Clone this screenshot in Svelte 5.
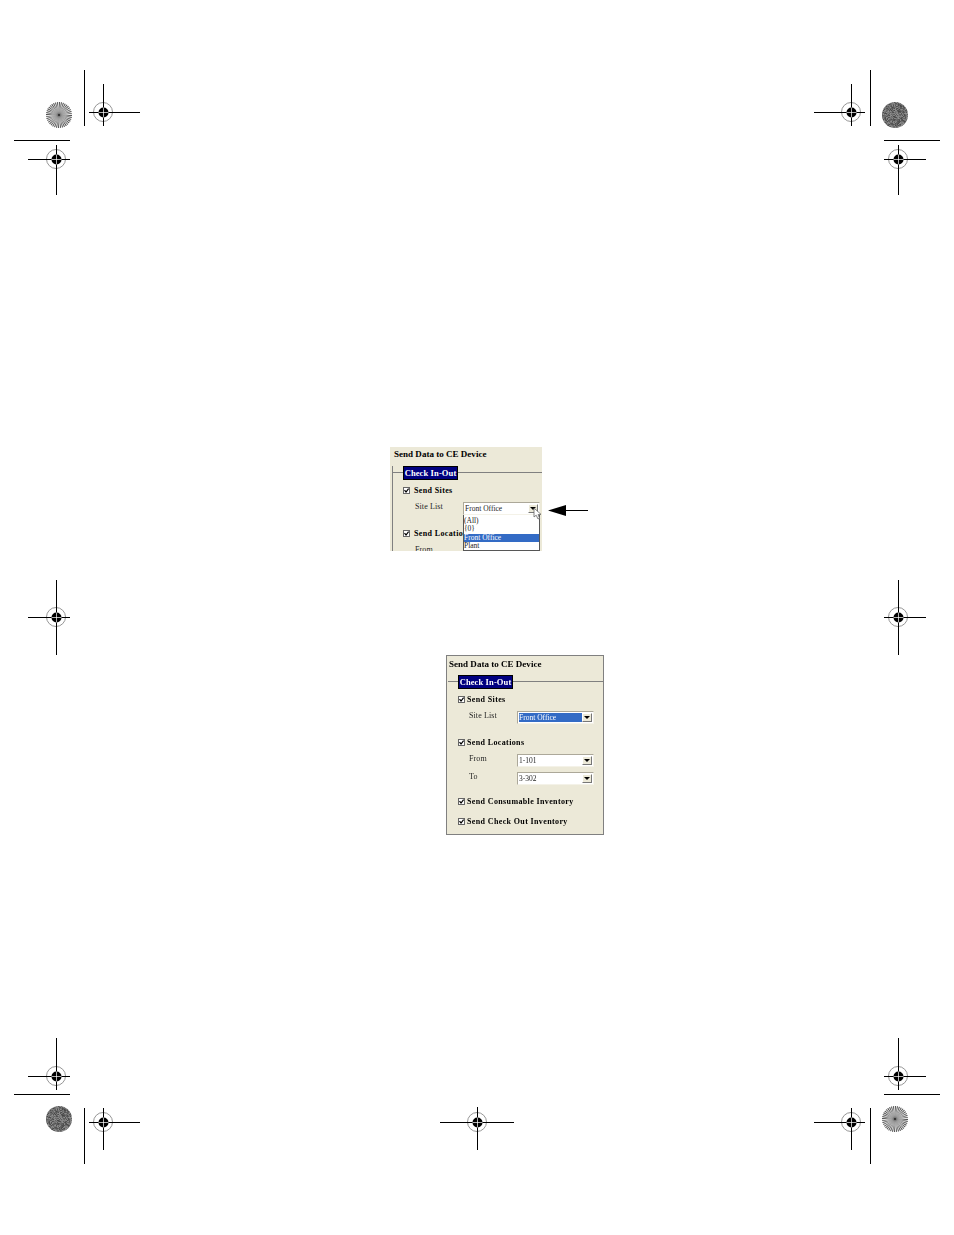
<script>
  const marks = [
    { cx: 103, cy: 112, x1: 89, x2: 140, y1: 84, y2: 126 },
    { cx: 56, cy: 159, x1: 28, x2: 70, y1: 145, y2: 195 },
    { cx: 851, cy: 112, x1: 814, x2: 865, y1: 84, y2: 126 },
    { cx: 898, cy: 159, x1: 884, x2: 926, y1: 145, y2: 195 },
    { cx: 56, cy: 617, x1: 28, x2: 70, y1: 580, y2: 655 },
    { cx: 898, cy: 617, x1: 884, x2: 926, y1: 580, y2: 655 },
    { cx: 56, cy: 1076, x1: 28, x2: 70, y1: 1038, y2: 1090 },
    { cx: 898, cy: 1076, x1: 884, x2: 926, y1: 1038, y2: 1090 },
    { cx: 103, cy: 1122, x1: 89, x2: 140, y1: 1108, y2: 1150 },
    { cx: 477, cy: 1122, x1: 440, x2: 514, y1: 1107, y2: 1150 },
    { cx: 851, cy: 1122, x1: 814, x2: 865, y1: 1108, y2: 1150 }
  ];
  const crops = [
    [84.5, 70, 84.5, 126], [14, 140.5, 70, 140.5],
    [870.5, 70, 870.5, 126], [884, 140.5, 940, 140.5],
    [14, 1094.5, 70, 1094.5], [84.5, 1108, 84.5, 1164],
    [884, 1094.5, 940, 1094.5], [870.5, 1108, 870.5, 1164]
  ];

  let seed = 17;
  function rnd() {
    seed = (seed * 16807) % 2147483647;
    return seed / 2147483647;
  }
  const noiseCells = [];
  for (let y = -13; y < 13; y++) {
    for (let x = -13; x < 13; x++) {
      const v = Math.round(70 + rnd() * 75);
      noiseCells.push({ x, y, fill: `rgb(${v},${v},${v})` });
    }
  }
  const wedges = [];
  const n = 40;
  for (let i = 0; i < n; i++) {
    const a = (i / n) * Math.PI * 2;
    const b = ((i + 0.45) / n) * Math.PI * 2;
    wedges.push(`M0 0L${(14 * Math.cos(a)).toFixed(2)} ${(14 * Math.sin(a)).toFixed(2)}L${(14 * Math.cos(b)).toFixed(2)} ${(14 * Math.sin(b)).toFixed(2)}Z`);
  }
  const noiseDiscs = [{ cx: 895, cy: 115 }, { cx: 59, cy: 1119 }];
  const spokeDiscs = [{ cx: 59, cy: 115 }, { cx: 895, cy: 1119 }];
</script>

{#snippet combo(value, selected = false)}
  <div class="combo">
    <span class="combo-text" class:selected>{value}</span>
    <span class="combo-btn"><i></i></span>
  </div>
{/snippet}

{#snippet check(label)}
  <div class="check-row">
    <svg class="box" width="7" height="7" viewBox="0 0 7 7" aria-hidden="true">
      <rect x="0.5" y="0.5" width="6" height="6" fill="#fff" stroke="#666" />
      <path d="M1.5 3.2 L3 5 L5.6 1.6" fill="none" stroke="#000" stroke-width="1.2" />
    </svg>
    <span>{label}</span>
  </div>
{/snippet}

{#snippet form(siteSelected)}
  <div class="title">Send Data to CE Device</div>
  <div class="group">
    <div class="tab">Check In-Out</div>
    {@render check('Send Sites')}
    <div class="field site"><span class="field-label">Site List</span>{@render combo('Front Office', siteSelected)}</div>
    <div class="locations">{@render check('Send Locations')}</div>
    <div class="field from"><span class="field-label">From</span>{@render combo('1-101')}</div>
    <div class="field to"><span class="field-label">To</span>{@render combo('3-302')}</div>
    <div class="consumable">{@render check('Send Consumable Inventory')}</div>
    <div class="checkout">{@render check('Send Check Out Inventory')}</div>
  </div>
{/snippet}

<main class="page">
  <svg class="canvas" width="954" height="1235" viewBox="0 0 954 1235" aria-hidden="true">
    <defs>
      <clipPath id="disc"><circle r="13" /></clipPath>
      <radialGradient id="hub">
        <stop offset="0" stop-color="#555" stop-opacity="1" />
        <stop offset="0.3" stop-color="#999" stop-opacity="0.95" />
        <stop offset="0.65" stop-color="#b0b0b0" stop-opacity="0.65" />
        <stop offset="1" stop-color="#bbb" stop-opacity="0" />
      </radialGradient>
    </defs>

    {#each crops as c}
      <line x1={c[0]} y1={c[1]} x2={c[2]} y2={c[3]} stroke="#000" stroke-width="1" />
    {/each}

    {#each marks as m}
      <circle cx={m.cx} cy={m.cy} r="9.5" fill="#fff" stroke="#8a8a8a" stroke-width="0.9" />
      <line x1={m.x1} y1={m.cy + 0.5} x2={m.x2} y2={m.cy + 0.5} stroke="#000" />
      <line x1={m.cx + 0.5} y1={m.y1} x2={m.cx + 0.5} y2={m.y2} stroke="#000" />
      <circle cx={m.cx + 0.5} cy={m.cy + 0.5} r="5" fill="#000" />
      <line x1={m.cx - 4.5} y1={m.cy + 0.5} x2={m.cx + 5.5} y2={m.cy + 0.5} stroke="#fff" stroke-width="0.7" />
      <line x1={m.cx + 0.5} y1={m.cy - 4.5} x2={m.cx + 0.5} y2={m.cy + 5.5} stroke="#fff" stroke-width="0.7" />
    {/each}

    {#each noiseDiscs as d}
      <g transform="translate({d.cx} {d.cy})" clip-path="url(#disc)">
        {#each noiseCells as c}
          <rect x={c.x} y={c.y} width="1" height="1" fill={c.fill} />
        {/each}
      </g>
    {/each}

    {#each spokeDiscs as d}
      <g transform="translate({d.cx} {d.cy})" clip-path="url(#disc)">
        <circle r="13" fill="#e6e6e6" />
        {#each wedges as w}
          <path d={w} fill="#444" />
        {/each}
        <circle r="10" fill="url(#hub)" />
        <circle r="0.9" fill="#222" />
      </g>
    {/each}

    <line x1="562" y1="510.5" x2="588" y2="510.5" stroke="#000" />
    <path d="M548 510.5 L566 505 L566 516 Z" fill="#000" />
  </svg>

  <section class="dialog first">
    {@render form(false)}
    <div class="popup">
      <div class="opt">(All)</div>
      <div class="opt">{'{0}'}</div>
      <div class="opt hi">Front Office</div>
      <div class="opt">Plant</div>
    </div>
    <svg class="cursor" width="10" height="14" viewBox="0 0 10 14" aria-hidden="true">
      <path d="M1 1 L1 10 L3.2 8.2 L5 12 L6.6 11.2 L5 7.6 L8 7.4 Z" fill="#fff" stroke="#666" stroke-width="0.8" />
    </svg>
  </section>

  <section class="dialog second">
    {@render form(true)}
  </section>
</main>

<style>
  :global(body) {
    margin: 0;
    background: #fff;
  }
  .page {
    position: relative;
    width: 954px;
    height: 1235px;
    overflow: hidden;
    background: #fff;
    font-family: "Liberation Serif", serif;
    color: #000;
  }
  .canvas {
    position: absolute;
    inset: 0;
    filter: blur(0.25px);
  }
  .dialog {
    position: absolute;
    box-sizing: border-box;
    background: #ece9d8;
    overflow: hidden;
    filter: blur(0.3px);
  }
  .first {
    left: 390px;
    top: 447px;
    width: 152px;
    height: 104px;
    padding-left: 2px;
  }
  .second {
    left: 446px;
    top: 655px;
    width: 158px;
    height: 180px;
    border: 1px solid #808080;
  }
  .title {
    height: 12px;
    line-height: 12px;
    padding: 2px 0 0 2px;
    font-size: 9px;
    font-weight: 700;
    letter-spacing: 0.02px;
    white-space: nowrap;
  }
  .first .title {
    padding: 1px 0 1px 2px;
  }
  .group {
    position: relative;
    width: 160px;
    margin-top: 5px;
    height: 170px;
    border-left: 1px solid #808080;
    box-sizing: border-box;
  }
  .second .group {
    border-left-color: transparent;
  }
  .group::before {
    content: "";
    position: absolute;
    left: 0;
    right: 0;
    top: 6px;
    border-top: 1px solid #808080;
  }
  .tab {
    position: relative;
    box-sizing: border-box;
    width: 55px;
    height: 14px;
    margin-left: 10px;
    margin-bottom: 4px;
    background: #000080;
    border: 1px solid #000;
    color: #fff;
    font-size: 8.5px;
    font-weight: 700;
    letter-spacing: 0.12px;
    line-height: 12px;
    text-align: center;
    white-space: nowrap;
  }
  .check-row {
    display: flex;
    align-items: center;
    gap: 2px;
    height: 12px;
    margin-left: 10px;
    font-size: 8px;
    font-weight: 700;
    letter-spacing: 0.37px;
    white-space: nowrap;
  }
  .first .check-row {
    gap: 4px;
  }
  .box {
    flex: none;
  }
  .field {
    display: flex;
    height: 13px;
    margin-left: 21px;
  }
  .first .field {
    margin-left: 22px;
  }
  .field-label {
    flex: none;
    width: 48px;
    font-size: 8px;
    letter-spacing: 0.1px;
    line-height: 10px;
    color: #222;
    opacity: 0.99;
  }
  .site { margin-top: 6px; }
  .locations { margin-top: 12px; }
  .from { margin-top: 6px; }
  .to { margin-top: 5px; }
  .consumable { margin-top: 10px; }
  .checkout { margin-top: 8px; }
  .combo {
    box-sizing: border-box;
    flex: none;
    display: flex;
    width: 77px;
    height: 13px;
    background: #fff;
    border: 1px solid;
    border-color: #aca899 #f4f2e8 #f4f2e8 #aca899;
    padding: 1px;
    font-size: 7.5px;
    line-height: 9px;
  }
  .combo-text {
    flex: 1;
    white-space: nowrap;
    overflow: hidden;
    color: #222;
    opacity: 0.99;
  }
  .combo-text.selected {
    background: #316ac5;
    color: #fff;
  }
  .combo-btn {
    flex: none;
    display: flex;
    align-items: center;
    justify-content: center;
    box-sizing: border-box;
    width: 10px;
    background: #ece9d8;
    border: 1px solid;
    border-color: #fff #777 #777 #fff;
  }
  .combo-btn i {
    display: block;
    width: 0;
    height: 0;
    border-left: 3px solid transparent;
    border-right: 3px solid transparent;
    border-top: 3.5px solid #000;
  }
  .popup {
    position: absolute;
    left: 73px;
    top: 68px;
    box-sizing: border-box;
    width: 77px;
    height: 36px;
    background: #fff;
    border: 1px solid #555;
    border-top: 0;
    padding-top: 1.5px;
    font-size: 7.5px;
    line-height: 8.5px;
    opacity: 0.99;
  }
  .opt {
    height: 8.5px;
    color: #222;
  }
  .opt.hi {
    background: #316ac5;
    color: #fff;
  }
  .cursor {
    position: absolute;
    left: 143px;
    top: 60px;
  }
</style>
